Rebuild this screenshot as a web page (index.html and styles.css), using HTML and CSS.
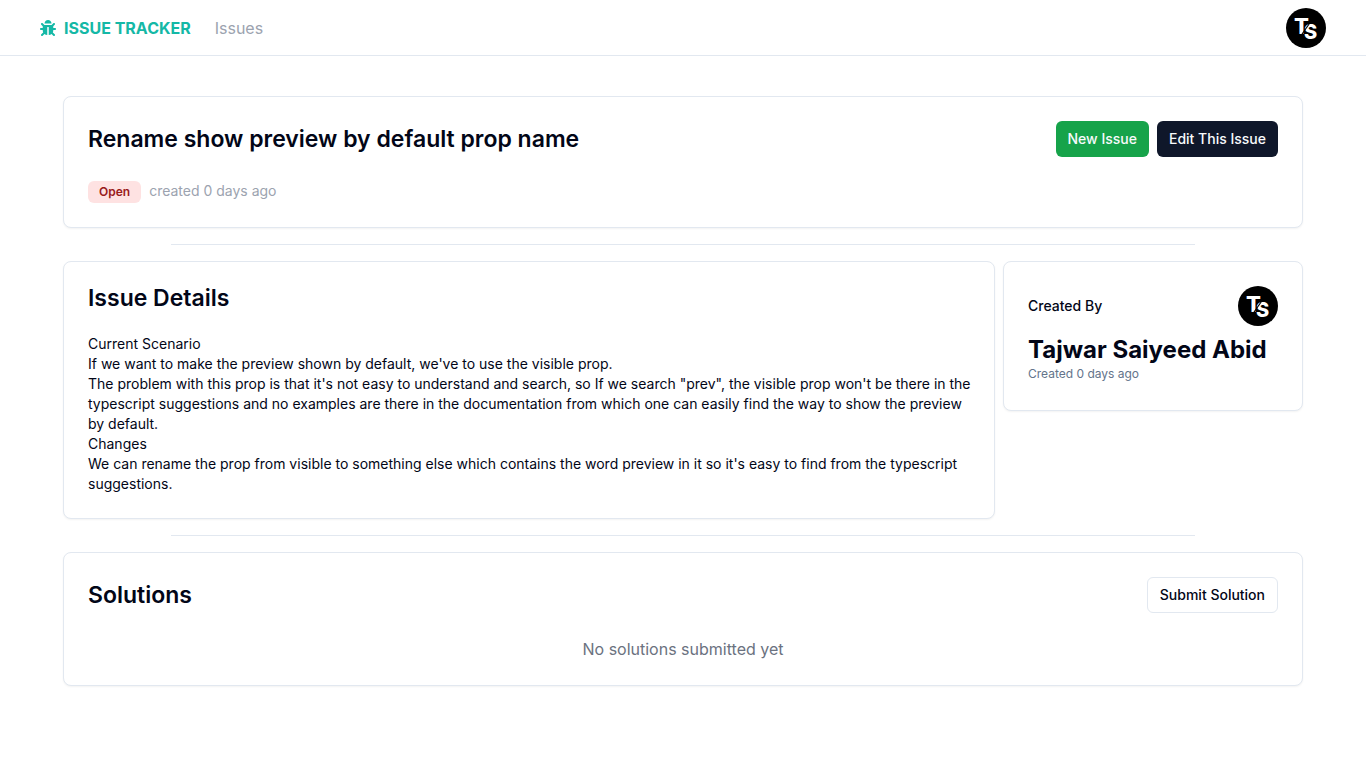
FILE: index.html
```html
<!DOCTYPE html>
<html lang="en">
<head>
<meta charset="utf-8">
<meta name="viewport" content="width=device-width, initial-scale=1">
<title>Issue Tracker</title>
<link rel="stylesheet" href="styles.css">
</head>
<body>
<header class="navbar">
  <nav class="nav">
    <a class="brand" href="#">
      <svg class="brand-icon" viewBox="0 0 512 512" aria-hidden="true"><path fill="currentColor" d="M511.988 288.9c-.478 17.43-15.217 31.1-32.653 31.1H424v16c0 21.864-4.882 42.584-13.6 61.145l60.228 60.228c12.496 12.497 12.496 32.758 0 45.255-12.498 12.497-32.759 12.496-45.256 0l-54.736-54.736C345.886 467.965 314.351 480 280 480V236c0-6.627-5.373-12-12-12h-24c-6.627 0-12 5.373-12 12v244c-34.351 0-65.886-12.035-90.636-32.108l-54.736 54.736c-12.498 12.497-32.759 12.496-45.256 0-12.496-12.497-12.496-32.758 0-45.255l60.228-60.228C92.882 378.584 88 357.864 88 336v-16H32.666C15.23 320 .491 306.33.013 288.9-.484 270.816 14.028 256 32 256h56v-58.745l-46.628-46.628c-12.496-12.497-12.496-32.758 0-45.255 12.498-12.497 32.758-12.497 45.256 0L141.255 160h229.489l54.627-54.627c12.498-12.497 32.758-12.497 45.256 0 12.496 12.497 12.496 32.758 0 45.255L424 197.255V256h56c17.972 0 32.484 14.816 31.988 32.9zM257 0c-61.856 0-112 50.144-112 112h224C369 50.144 318.856 0 257 0z"/></svg>
      ISSUE TRACKER
    </a>
    <a class="nav-link" href="#">Issues</a>
  </nav>
  <button class="avatar-button" type="button" aria-label="Account menu">
    <svg class="avatar" viewBox="0 0 40 40" aria-hidden="true">
      <circle cx="20" cy="20" r="20" fill="#000"/>
      <text class="monogram" x="8" y="26">T<tspan class="monogram-small" x="18" y="31">S</tspan></text>
      <path d="M28 9 14 29" stroke="#000" stroke-width="1.2"/>
    </svg>
  </button>
</header>

<main class="page">
  <section class="card">
    <div class="card-header">
      <h1 class="card-title">Rename show preview by default prop name</h1>
      <div class="actions">
        <button class="button button-success" type="button">New Issue</button>
        <button class="button button-primary" type="button">Edit This Issue</button>
      </div>
    </div>
    <div class="meta">
      <span class="badge">Open</span>
      <span class="created">created 0 days ago</span>
    </div>
  </section>

  <hr class="divider">

  <div class="columns">
    <section class="card details">
      <div class="card-header">
        <h2 class="card-title">Issue Details</h2>
      </div>
      <div class="description">
        <p>Current Scenario</p>
        <p>If we want to make the preview shown by default, we've to use the visible prop.</p>
        <p>The problem with this prop is that it's not easy to understand and search, so If we search "prev", the visible prop won't be there in the typescript suggestions and no examples are there in the documentation from which one can easily find the way to show the preview by default.</p>
        <p>Changes</p>
        <p>We can rename the prop from visible to something else which contains the word preview in it so it's easy to find from the typescript suggestions.</p>
      </div>
    </section>

    <aside class="card author">
      <div class="author-header">
        <h3 class="author-label">Created By</h3>
        <svg class="avatar" viewBox="0 0 40 40" role="img" aria-label="Tajwar Saiyeed Abid">
          <circle cx="20" cy="20" r="20" fill="#000"/>
          <text class="monogram" x="8" y="26">T<tspan class="monogram-small" x="18" y="31">S</tspan></text>
          <path d="M28 9 14 29" stroke="#000" stroke-width="1.2"/>
        </svg>
      </div>
      <div class="author-name">Tajwar Saiyeed Abid</div>
      <p class="author-date">Created 0 days ago</p>
    </aside>
  </div>

  <hr class="divider">

  <section class="card">
    <div class="card-header">
      <h2 class="card-title">Solutions</h2>
      <button class="button button-outline" type="button">Submit Solution</button>
    </div>
    <p class="empty">No solutions submitted yet</p>
  </section>
</main>
</body>
</html>
```
FILE: styles.css
```css
*,
*::before,
*::after {
  box-sizing: border-box;
}

body {
  margin: 0;
  background: #fff;
  color: #020617;
  font-family: Inter, "Liberation Sans", sans-serif;
  font-size: 16px;
  line-height: 24px;
}

h1, h2, h3, p {
  margin: 0;
}

button {
  font-family: inherit;
  cursor: pointer;
}

.navbar {
  display: flex;
  align-items: center;
  justify-content: space-between;
  height: 56px;
  padding: 0 40px;
  border-bottom: 1px solid #e2e8f0;
}

.nav {
  display: flex;
  align-items: center;
  gap: 24px;
}

.brand {
  display: flex;
  align-items: center;
  gap: 8px;
  color: #14b8a6;
  font-weight: 700;
  text-decoration: none;
}

.brand-icon {
  width: 16px;
  height: 16px;
}

.nav-link {
  color: #9ca3af;
  text-decoration: none;
}

.avatar-button {
  padding: 0;
  border: 0;
  border-radius: 50%;
  background: none;
}

.avatar {
  display: block;
  flex: none;
  width: 40px;
  height: 40px;
}

.monogram {
  fill: #fff;
  font-size: 22px;
  font-weight: 800;
}

.monogram-small {
  font-size: 20px;
}

.page {
  max-width: 1280px;
  margin: 0 auto;
  padding: 40px 20px;
}

.card {
  padding: 24px;
  border: 1px solid #e2e8f0;
  border-radius: 8px;
  background: #fff;
  box-shadow: 0 1px 2px rgba(0, 0, 0, 0.05);
}

.card-header {
  display: flex;
  align-items: center;
  justify-content: space-between;
  gap: 16px;
  margin-bottom: 24px;
}

.card-title {
  font-size: 23px;
  font-weight: 600;
  line-height: 24px;
}

.actions {
  display: flex;
  gap: 8px;
}

.button {
  height: 36px;
  padding: 0 12px;
  border: 0;
  border-radius: 6px;
  font-size: 14px;
  font-weight: 500;
  line-height: 20px;
  white-space: nowrap;
}

.button-success {
  background: #16a34a;
  color: #f8fafc;
}

.button-primary {
  background: #0f172a;
  color: #f8fafc;
}

.button-outline {
  border: 1px solid #e2e8f0;
  background: #fff;
  color: #020617;
}

.meta {
  display: flex;
  align-items: flex-start;
  gap: 8px;
}

.badge {
  padding: 3px 11px;
  border-radius: 6px;
  background: #fee2e2;
  color: #991b1b;
  font-size: 12px;
  font-weight: 600;
  line-height: 16px;
}

.created {
  color: #9ca3af;
  font-size: 14px;
  line-height: 20px;
}

.divider {
  max-width: 1024px;
  height: 1px;
  margin: 16px auto;
  border: 0;
  background: #e2e8f0;
}

.columns {
  display: grid;
  grid-template-columns: minmax(0, 1fr) 300px;
  align-items: start;
  gap: 8px;
}

.details {
  padding-right: 20px;
}

.description {
  font-size: 14px;
  line-height: 20px;
}

.author {
  padding-bottom: 28px;
}

.author-header {
  display: flex;
  align-items: center;
  justify-content: space-between;
  margin-bottom: 8px;
}

.author-label {
  font-size: 14px;
  font-weight: 500;
  line-height: 20px;
}

.author-name {
  font-size: 24px;
  font-weight: 700;
  line-height: 32px;
}

.author-date {
  color: #64748b;
  font-size: 12px;
  line-height: 16px;
}

.empty {
  color: #6b7280;
  text-align: center;
}

@media (max-width: 800px) {
  .columns {
    grid-template-columns: minmax(0, 1fr);
  }
}
```
